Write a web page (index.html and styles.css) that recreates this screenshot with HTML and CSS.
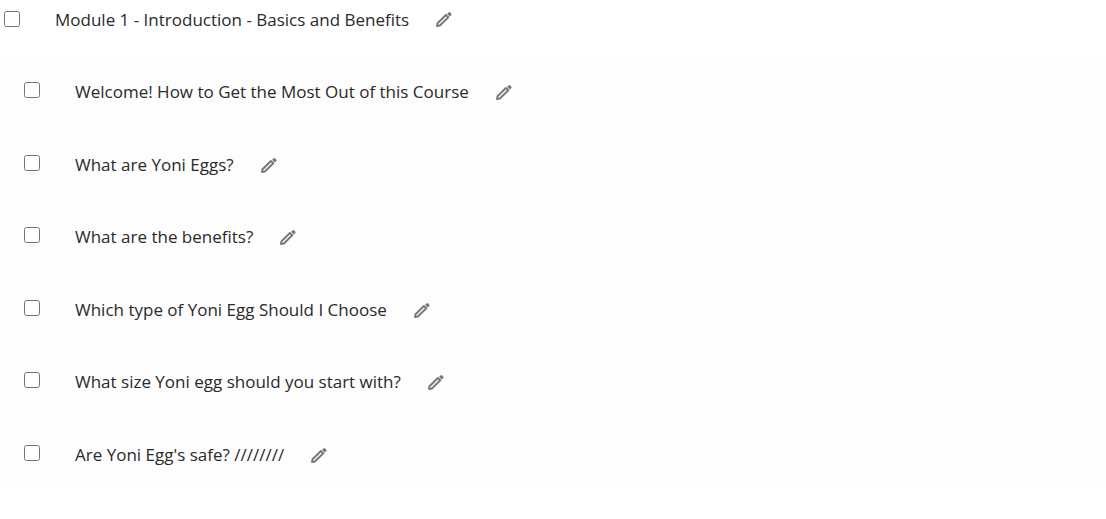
FILE: index.html
```html
<!DOCTYPE html>
<html lang="en">
<head>
<meta charset="utf-8">
<title>Course modules</title>
<link rel="stylesheet" href="styles.css">
</head>
<body>
<svg class="sprite" aria-hidden="true"><symbol id="pencil" viewBox="0 0 18 18"><path fill="none" stroke="currentColor" stroke-width="1.900" stroke-linejoin="round" d="M2 16L2.500 13.200L10.900 5L13.300 7.300L4.900 15.500Z"/><path fill="currentColor" d="M12.100 3.800L13.500 2.400Q14.400 1.700 15.200 2.500L16.200 3.500Q17 4.400 16.200 5.200L14.800 6.500Z"/></symbol></svg>
<main class="outline">
<div class="row module"><input type="checkbox" id="m1"><label for="m1">Module 1 - Introduction - Basics and Benefits</label><button type="button" class="edit" aria-label="Edit"><svg><use href="#pencil"/></svg></button></div>
<ul class="lessons">
<li class="row"><input type="checkbox" id="l1"><label for="l1">Welcome! How to Get the Most Out of this Course</label><button type="button" class="edit" aria-label="Edit"><svg><use href="#pencil"/></svg></button></li>
<li class="row"><input type="checkbox" id="l2"><label for="l2">What are Yoni Eggs?</label><button type="button" class="edit" aria-label="Edit"><svg><use href="#pencil"/></svg></button></li>
<li class="row"><input type="checkbox" id="l3"><label for="l3">What are the benefits?</label><button type="button" class="edit" aria-label="Edit"><svg><use href="#pencil"/></svg></button></li>
<li class="row"><input type="checkbox" id="l4"><label for="l4">Which type of Yoni Egg Should I Choose</label><button type="button" class="edit" aria-label="Edit"><svg><use href="#pencil"/></svg></button></li>
<li class="row"><input type="checkbox" id="l5"><label for="l5">What size Yoni egg should you start with?</label><button type="button" class="edit" aria-label="Edit"><svg><use href="#pencil"/></svg></button></li>
<li class="row"><input type="checkbox" id="l6"><label for="l6">Are Yoni Egg's safe? ////////</label><button type="button" class="edit" aria-label="Edit"><svg><use href="#pencil"/></svg></button></li>
</ul>
</main>
</body>
</html>
```
FILE: styles.css
```css
body { margin: 0; background: #fff; color: #2a2a2a; font: 17px/24px "Open Sans", "Noto Sans", sans-serif; }
.sprite { position: absolute; width: 0; height: 0; }
.row { display: flex; align-items: center; }
.module { padding: 6px 4px; }
.lessons { display: grid; grid-auto-rows: 1fr; row-gap: 4px; min-height: 431px; margin: 18px 0 0; padding: 0; list-style: none; background: #fefefe; }
.lessons .row { padding: 0 24px; background: #fdfdfd; }
input { width: 16px; height: 16px; margin: 0; }
label { margin-left: 35px; padding-top: 2px; }
.lessons label, .lessons .edit { padding-top: 4px; }
.edit { margin: 0 0 0 26px; padding: 0; border: 0; background: none; color: #777; }
.edit svg { display: block; width: 18px; height: 18px; }
```
